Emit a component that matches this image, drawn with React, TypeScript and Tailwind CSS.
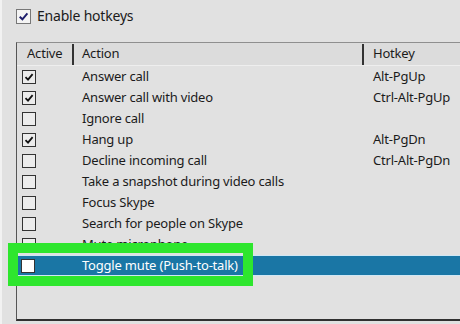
import React from "react";

type Row = { on: boolean; action: string; hotkey: string };

const rows: Row[] = [
  { on: true, action: "Answer call", hotkey: "Alt-PgUp" },
  { on: true, action: "Answer call with video", hotkey: "Ctrl-Alt-PgUp" },
  { on: false, action: "Ignore call", hotkey: "" },
  { on: true, action: "Hang up", hotkey: "Alt-PgDn" },
  { on: false, action: "Decline incoming call", hotkey: "Ctrl-Alt-PgDn" },
  { on: false, action: "Take a snapshot during video calls", hotkey: "" },
  { on: false, action: "Focus Skype", hotkey: "" },
  { on: false, action: "Search for people on Skype", hotkey: "" },
  { on: false, action: "Mute microphone", hotkey: "" },
];

function Tick({ color }: { color: string }) {
  return (
    <svg viewBox="0 0 12 12" className="h-full w-full">
      <path d="M2.5 6.2 L5 8.6 L9.6 3.2" fill="none" stroke={color} strokeWidth="1.8" />
    </svg>
  );
}

function Box({ on, selected }: { on: boolean; selected?: boolean }) {
  return (
    <div
      className={`h-[14px] w-[14px] border border-[#333] ${selected ? "bg-white" : "bg-[#ececec]"}`}
    >
      {on && <Tick color="#111" />}
    </div>
  );
}

export default function App() {
  return (
    <div
      className="relative h-[324px] w-[460px] overflow-hidden border-l-2 border-[#f2f2f2] bg-[#e1e1e1] text-[13px] tracking-[-0.2px] text-[#1b1b1b]"
      style={{ fontFamily: '"Noto Sans", "Open Sans", sans-serif' }}
    >
      {/* enable hotkeys */}
      <div className="flex h-[42px] items-start pl-[14px] pt-[8px]">
        <div className="flex items-center gap-[6px]">
          <div className="h-[15px] w-[15px] border border-[#777] bg-[#f4f4f4]">
            <Tick color="#1d1d6b" />
          </div>
          <span className="text-[14px] leading-[16px]">Enable hotkeys</span>
        </div>
      </div>

      {/* list */}
      <div className="ml-[14px] h-[279px] w-[460px] border-l border-t border-b-2 border-l-[#555] border-t-[#8f8f8f] border-b-[#303030]">
        <div className="flex h-[23px] items-center border-b border-[#eeeeee] bg-[#dcdcdc]">
          <div className="flex w-[55px] items-center pl-[10px]">Active</div>
          <div className="h-[21px] w-[2px] bg-[#333]" />
          <div className="flex w-[288px] items-center pl-[8px]">Action</div>
          <div className="h-[21px] w-[2px] bg-[#333]" />
          <div className="pl-[9px]">Hotkey</div>
        </div>

        {rows.map((r) => (
          <div key={r.action} className="flex h-[21px] items-center">
            <div className="w-[57px] pl-[5px]">
              <Box on={r.on} />
            </div>
            <div className="w-[290px] pl-[8px]">{r.action}</div>
            <div className="pl-[9px]">{r.hotkey}</div>
          </div>
        ))}

        <div className="flex h-[21px] items-center border-y border-[#cfe7f4] bg-[#1a76a5] text-white">
          <div className="w-[57px] pl-[4px]">
            <Box on={false} selected />
          </div>
          <div className="w-[290px] pl-[8px]">Toggle mute (Push-to-talk)</div>
        </div>
      </div>

      {/* annotation */}
      <div className="absolute left-[6px] top-[243px] h-[43px] w-[245px] border-[10px] border-[#2ee62e]" />
    </div>
  );
}
